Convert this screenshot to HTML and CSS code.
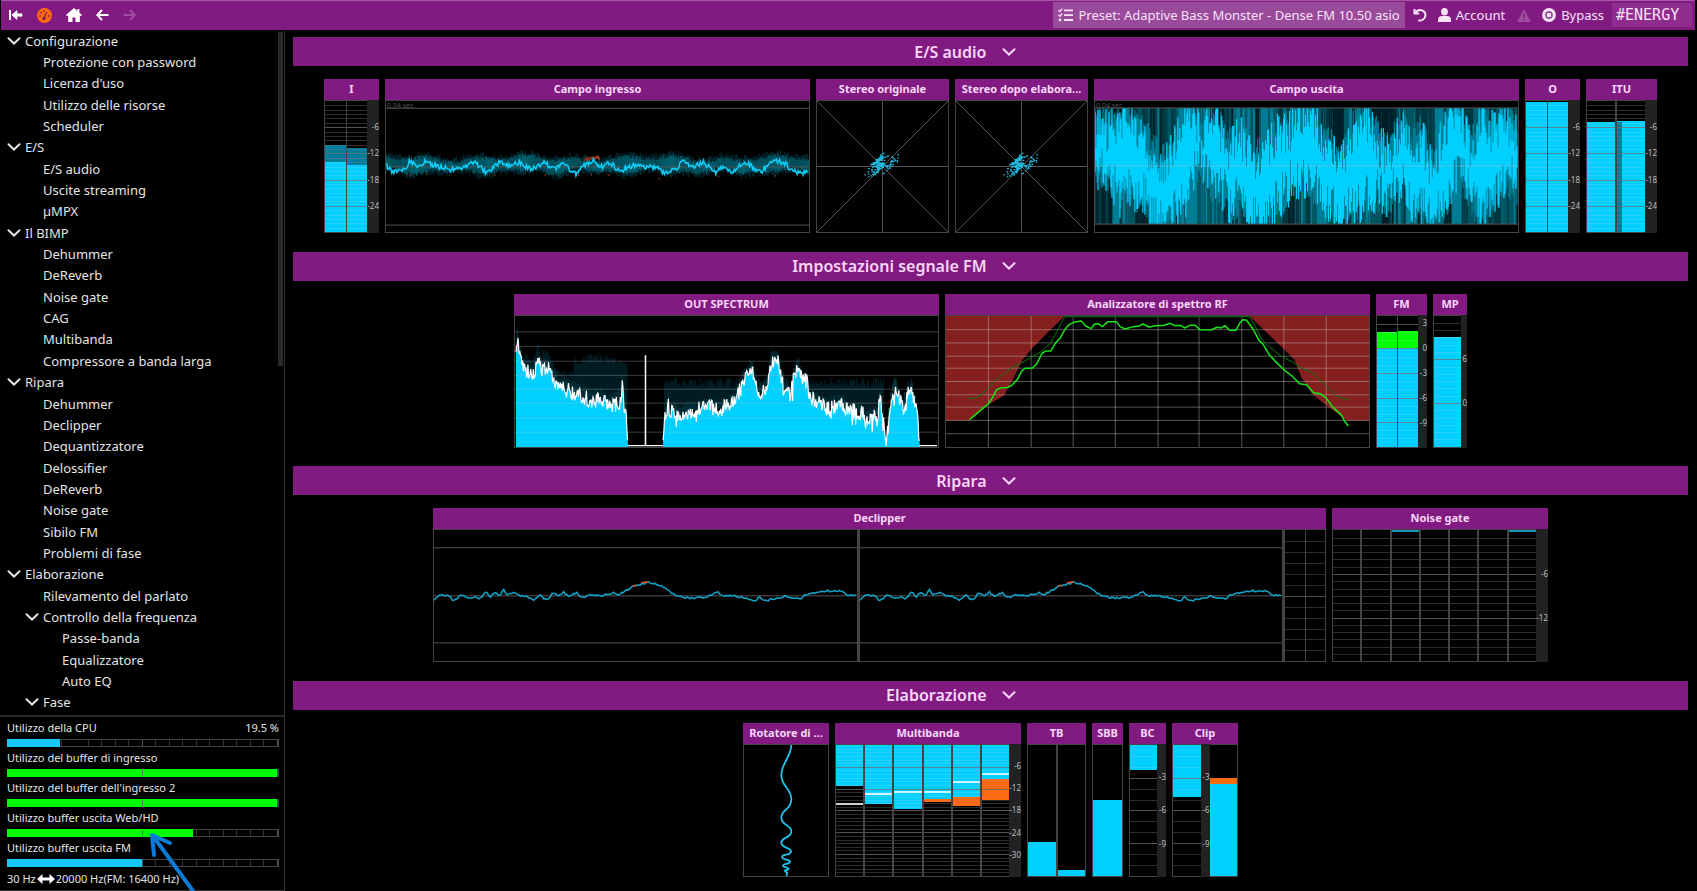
FILE: index.html
```html
<!DOCTYPE html>
<html lang="it">
<head>
<meta charset="utf-8">
<title>Adaptive Bass Monster</title>
<link rel="stylesheet" href="styles.css">
</head>
<body>
<svg class="defs" aria-hidden="true">
  <symbol id="chev" viewBox="0 0 14 8"><path d="M1.5 1.2 7 6.5 12.5 1.2" fill="none" stroke="currentColor" stroke-width="2" stroke-linecap="round"/></symbol>
</svg>
<header class="topbar">
  <div class="tools">
    <button class="tool" aria-label="Riduci menu"><svg width="14" height="12" viewBox="0 0 14 12"><path d="M1 1v10" stroke="currentColor" stroke-width="2"/><path d="M13 4.8H8V1.5L2.8 6 8 10.5V7.2h5z" fill="currentColor" stroke="currentColor" stroke-width=".6"/></svg></button>
    <button class="tool gauge" aria-label="Pannello"><svg width="15" height="15" viewBox="0 0 15 15"><circle cx="7.5" cy="7.5" r="7.5" fill="currentColor"/><path d="M6.8 10.2 9.8 4.2" stroke="#7a1f50" stroke-width="1.4"/><circle cx="7" cy="10.6" r="1.7" fill="#7a1f50"/><g fill="#7a1f50"><circle cx="3" cy="8" r=".9"/><circle cx="4.3" cy="4.6" r=".9"/><circle cx="7.3" cy="3.1" r=".9"/><circle cx="12" cy="8" r=".9"/></g></svg></button>
    <button class="tool" aria-label="Home"><svg width="16" height="14" viewBox="0 0 16 14"><path d="M8 0 0 7l1 1.2 1.2-1V14h4.3V9.5h3V14h4.3V7.2l1.2 1L16 7l-2.6-2.3V1h-2v2z" fill="currentColor"/></svg></button>
    <button class="tool" aria-label="Indietro"><svg width="13" height="12" viewBox="0 0 13 12"><path d="M6 1 1.3 6 6 11M1.5 6H12.5" fill="none" stroke="currentColor" stroke-width="2"/></svg></button>
    <button class="tool dim" aria-label="Avanti" disabled><svg width="13" height="12" viewBox="0 0 13 12"><path d="M7 1 11.7 6 7 11M11.5 6H.5" fill="none" stroke="currentColor" stroke-width="2"/></svg></button>
  </div>
  <div class="status">
    <button class="preset"><svg width="15" height="14" viewBox="0 0 15 14"><path d="M.5 2.2 1.8 3.5 4.2.8M.5 7 1.8 8.2 4.2 5.5" fill="none" stroke="currentColor" stroke-width="1.3"/><circle cx="2" cy="12" r="1.4" fill="currentColor"/><path d="M6 2.3h9M6 7.1h9M6 12h9" stroke="currentColor" stroke-width="1.8"/></svg>Preset: Adaptive Bass Monster - Dense FM 10.50 asio</button>
    <button class="tool" aria-label="Annulla"><svg width="14" height="14" viewBox="0 0 14 14"><path d="M1.5 1v4.600h4.600M2 5.400C3.600 2.600 6 1.700 8.200 2.200 11 2.800 12.600 5 12.400 7.600 12.100 11 9 13 5.200 12.500" fill="none" stroke="currentColor" stroke-width="2"/></svg></button>
    <button class="item"><svg width="13" height="14" viewBox="0 0 13 14"><ellipse cx="6.500" cy="3.800" rx="3.400" ry="3.800" fill="currentColor"/><path d="M0 14v-2.500C0 9 2 8 4 8h5c2 0 4 1 4 3.500V14z" fill="currentColor"/></svg>Account</button>
    <button class="tool dim" aria-label="Avvisi"><svg width="14" height="13" viewBox="0 0 14 13"><path d="M7 0 14 13H0z" fill="currentColor"/><path d="M7 4.500v4M7 9.800v1.500" stroke="#811b81" stroke-width="1.500"/></svg></button>
    <button class="item"><svg width="14" height="14" viewBox="0 0 14 14"><circle cx="7" cy="7" r="5.300" fill="none" stroke="currentColor" stroke-width="3.200"/><rect x="4.800" y="4.800" width="4.400" height="4.400" fill="currentColor"/></svg>Bypass</button>
    <span class="brand">#ENERGY</span>
  </div>
</header>
<div class="body">
<aside class="side">
  <nav class="tree">
    <a href="#" class="l0"><svg><use href="#chev"/></svg>Configurazione</a>
    <a href="#" class="l1">Protezione con password</a>
    <a href="#" class="l1">Licenza d'uso</a>
    <a href="#" class="l1">Utilizzo delle risorse</a>
    <a href="#" class="l1">Scheduler</a>
    <a href="#" class="l0"><svg><use href="#chev"/></svg>E/S</a>
    <a href="#" class="l1">E/S audio</a>
    <a href="#" class="l1">Uscite streaming</a>
    <a href="#" class="l1">µMPX</a>
    <a href="#" class="l0"><svg><use href="#chev"/></svg>Il BIMP</a>
    <a href="#" class="l1">Dehummer</a>
    <a href="#" class="l1">DeReverb</a>
    <a href="#" class="l1">Noise gate</a>
    <a href="#" class="l1">CAG</a>
    <a href="#" class="l1">Multibanda</a>
    <a href="#" class="l1">Compressore a banda larga</a>
    <a href="#" class="l0"><svg><use href="#chev"/></svg>Ripara</a>
    <a href="#" class="l1">Dehummer</a>
    <a href="#" class="l1">Declipper</a>
    <a href="#" class="l1">Dequantizzatore</a>
    <a href="#" class="l1">Delossifier</a>
    <a href="#" class="l1">DeReverb</a>
    <a href="#" class="l1">Noise gate</a>
    <a href="#" class="l1">Sibilo FM</a>
    <a href="#" class="l1">Problemi di fase</a>
    <a href="#" class="l0"><svg><use href="#chev"/></svg>Elaborazione</a>
    <a href="#" class="l1">Rilevamento del parlato</a>
    <a href="#" class="l1 group"><svg><use href="#chev"/></svg>Controllo della frequenza</a>
    <a href="#" class="l2">Passe-banda</a>
    <a href="#" class="l2">Equalizzatore</a>
    <a href="#" class="l2">Auto EQ</a>
    <a href="#" class="l1 group"><svg><use href="#chev"/></svg>Fase</a>
  </nav>
  <div class="usage">
    <div class="use"><span>Utilizzo della CPU</span><span>19.5 %</span></div>
    <div class="gaugebar"><i style="width:19.5%"></i></div>
    <div class="use"><span>Utilizzo del buffer di ingresso</span></div>
    <div class="gaugebar ok"><i style="width:100%"></i></div>
    <div class="use"><span>Utilizzo del buffer dell'ingresso 2</span></div>
    <div class="gaugebar ok"><i style="width:100%"></i></div>
    <div class="use"><span>Utilizzo buffer uscita Web/HD</span></div>
    <div class="gaugebar ok"><i style="width:69%"></i></div>
    <div class="use"><span>Utilizzo buffer uscita FM</span></div>
    <div class="gaugebar"><i style="width:50%"></i></div>
    <p class="range"><span>30 Hz</span><svg width="18" height="10" viewBox="0 0 18 10"><path d="M0 5 5.500 0v3.500h7V0L18 5l-5.500 5V6.500h-7V10z" fill="#fff"/></svg><span>20000 Hz(FM: 16400 Hz)</span></p>
  </div>
  <svg class="pointer" width="50" height="60" viewBox="0 0 50 60"><path d="M44 60 4 5M5 24 3 4 21 12" fill="none" stroke="#0a7bd6" stroke-width="4" stroke-linecap="round" stroke-linejoin="round"/></svg>
</aside>
<main class="main">
  <section>
    <h2><button>E/S audio</button><svg><use href="#chev"/></svg></h2>
    <div class="row">
      <article class="panel w-io"><h3>I</h3>
        <div class="meter" data-top="0" data-bottom="-30" data-major="6">
          <div class="col"><i class="peak" style="top:33.500%"></i><i class="fill" style="top:46.500%"></i></div>
          <div class="col"><i class="peak" style="top:35.500%"></i><i class="fill" style="top:48.800%"></i></div>
          <div class="scale"></div>
        </div></article>
      <article class="panel w-scope"><h3>Campo ingresso</h3><div class="chart"><small>0.04 sec</small><svg id="input" viewBox="276 210 1234 398" preserveAspectRatio="none"></svg></div></article>
      <article class="panel w-stereo"><h3>Stereo originale</h3><div class="chart"><svg class="stereo" viewBox="0 0 133 133" preserveAspectRatio="none"></svg></div></article>
      <article class="panel w-stereo"><h3>Stereo dopo elabora...</h3><div class="chart"><svg class="stereo" viewBox="0 0 133 133" preserveAspectRatio="none"></svg></div></article>
      <article class="panel w-scope"><h3>Campo uscita</h3><div class="chart"><small>0.04 sec</small><svg id="output" viewBox="0 100 424 133" preserveAspectRatio="none"></svg></div></article>
      <article class="panel w-io"><h3>O</h3>
        <div class="meter" data-top="0" data-bottom="-30" data-major="6">
          <div class="col"><i class="fill" style="top:1%"></i></div>
          <div class="col"><i class="fill" style="top:1%"></i></div>
          <div class="scale"></div>
        </div></article>
      <article class="panel w-itu"><h3>ITU</h3>
        <div class="meter split" data-top="0" data-bottom="-30" data-major="6">
          <div class="col"><i class="fill" style="top:16%"></i></div>
          <div class="col"><i class="fill" style="top:15%"></i><i class="strip"></i></div>
          <div class="scale"></div>
        </div></article>
    </div>
  </section>
  <section>
    <h2><button>Impostazioni segnale FM</button><svg><use href="#chev"/></svg></h2>
    <div class="row">
      <article class="panel w-scope"><h3>OUT SPECTRUM</h3><div class="chart"><svg id="spectrum" viewBox="42 103 1274 397" preserveAspectRatio="none"></svg></div></article>
      <article class="panel w-scope"><h3>Analizzatore di spettro RF</h3><div class="chart">
        <svg viewBox="46 106 1207 394" preserveAspectRatio="none">
          <path fill="#86201f" d="M46 106H385L340 152 290 205 265 237 240 290 212 345 165 374 113 420H46zM1253 106H912L960 155 1010 205 1040 237 1060 290 1090 340 1130 374 1190 420H1253z"/>
          <path class="g2" d="M46 147H1253M46 187H1253M46 227H1253M46 263H1253M46 303H1253M46 343H1253M46 380H1253M46 420H1253M46 460H1253M167 106V500M289 106V500M409 106V500M529 106V500M651 106V500M768 106V500M890 106V500M1010 106V500M1131 106V500"/>
          <path fill="none" stroke="#087808" stroke-width="1" vector-effect="non-scaling-stroke" d="M110 353 128 354 150 340 180 305 210 280 235 260 260 248 290 230 318 213 345 187 365 147 385 108H912L930 140 945 172 960 192 1000 225 1040 248 1060 262 1090 276 1115 300 1140 325 1165 350 1195 357"/>
          <path fill="none" stroke="#16e616" stroke-width="1.500" vector-effect="non-scaling-stroke" stroke-linejoin="round" d="M113 418 135 398 167 370 178 352 190 328 205 322 222 321 235 313 250 296 262 272 272 263 292 263 305 250 320 218 332 211 345 211 360 185 372 172 385 147 395 134 410 125 432 121 445 136 460 144 470 130 480 129 492 138 508 123 532 123 543 138 557 145 580 138 595 137 608 130 625 139 645 135 670 134 684 128 700 135 715 134 727 142 742 134 757 134 770 147 802 148 820 140 832 142 842 135 855 149 873 149 884 128 893 117 903 118 920 142 940 180 950 190 970 225 990 247 1015 272 1035 288 1055 310 1075 313 1095 337 1115 340 1130 352 1150 380 1175 405 1185 425 1194 437"/>
        </svg></div></article>
      <article class="panel w-fm"><h3>FM</h3>
        <div class="meter slim" data-top="4" data-bottom="-12" data-major="3">
          <div class="col"><i class="fill" style="top:25%"></i><i class="hot" style="top:12.500%;bottom:75%"></i></div>
          <div class="col"><i class="fill" style="top:25%"></i><i class="hot" style="top:11.800%;bottom:75%"></i></div>
          <div class="scale"></div>
        </div></article>
      <article class="panel w-mp"><h3>MP</h3>
        <div class="meter narrow" data-top="12" data-bottom="-6" data-major="6">
          <div class="col"><i class="fill" style="top:16%"></i></div>
          <div class="scale"></div>
        </div></article>
    </div>
  </section>
  <section>
    <h2><button>Ripara</button><svg><use href="#chev"/></svg></h2>
    <div class="row">
      <article class="panel w-declip"><h3>Declipper</h3>
        <div class="declip">
          <div class="chart"><svg class="wave" viewBox="42 119 1273 398" preserveAspectRatio="none"></svg></div>
          <div class="chart"><svg class="wave" viewBox="42 119 1273 398" preserveAspectRatio="none"></svg></div>
          <div class="meter" data-top="0" data-bottom="-12" data-major="6"><div class="col"></div><div class="col"></div></div>
        </div></article>
      <article class="panel w-gate"><h3>Noise gate</h3>
        <div class="meter split" data-top="0" data-bottom="-18" data-major="6">
          <div class="col"></div><div class="col"></div><div class="col"><i class="tip"></i></div><div class="col"></div><div class="col"></div><div class="col"></div><div class="col"><i class="tip"></i></div>
          <div class="scale"></div>
        </div></article>
    </div>
  </section>
  <section>
    <h2><button>Elaborazione</button><svg><use href="#chev"/></svg></h2>
    <div class="row">
      <article class="panel w-rot"><h3>Rotatore di ...</h3><div class="chart">
        <svg viewBox="40 105 252 394" preserveAspectRatio="none"><path fill="none" stroke="#22c3ee" stroke-width="1.800" vector-effect="non-scaling-stroke" d="M182 105C182 140 152 160 152 195S182 235 182 268 152 298 152 323 182 345 182 365 152 382 152 399 181 413 181 425 154 433 154 442 178 449 178 456 157 462 157 468 174 472 174 477 162 480 163 484 170 487 170 490L167 499"/></svg></div></article>
      <article class="panel w-multi"><h3>Multibanda</h3>
        <div class="meter split" data-top="0" data-bottom="-36" data-major="6">
          <div class="col"><i class="fill" style="top:0;bottom:68.500%"></i><i class="mark" style="top:44.500%"></i></div>
          <div class="col"><i class="fill" style="top:0;bottom:55%"></i><i class="mark" style="top:37%"></i></div>
          <div class="col"><i class="fill" style="top:0;bottom:51.400%"></i><i class="mark" style="top:35.500%"></i></div>
          <div class="col"><i class="fill" style="top:0;bottom:58.800%"></i><i class="over" style="top:41.200%;bottom:56.500%"></i><i class="mark" style="top:35.500%"></i></div>
          <div class="col"><i class="fill" style="top:0;bottom:60%"></i><i class="over" style="top:40%;bottom:53.400%"></i><i class="mark" style="top:27.500%"></i></div>
          <div class="col"><i class="fill" style="top:0;bottom:73.800%"></i><i class="over" style="top:26.200%;bottom:57.800%"></i><i class="mark" style="top:21.500%"></i></div>
          <div class="scale"></div>
        </div></article>
      <article class="panel w-tb"><h3>TB</h3>
        <div class="meter split">
          <div class="col"><i class="fill" style="top:74%"></i></div>
          <div class="col"><i class="fill" style="top:95.500%"></i></div>
        </div></article>
      <article class="panel w-sbb"><h3>SBB</h3><div class="meter"><div class="col"><i class="fill" style="top:42%"></i></div></div></article>
      <article class="panel w-bc"><h3>BC</h3>
        <div class="meter slim" data-top="0" data-bottom="-12" data-major="3">
          <div class="col"><i class="fill" style="top:0;bottom:81.200%"></i></div>
          <div class="scale"></div>
        </div></article>
      <article class="panel w-clip"><h3>Clip</h3>
        <div class="meter slim" data-top="0" data-bottom="-12" data-major="3">
          <div class="col"><i class="fill" style="top:0;bottom:60.300%"></i></div>
          <div class="scale"></div>
          <div class="col plain"><i class="fill" style="top:29.500%"></i><i class="over" style="top:25.500%;bottom:70.500%"></i></div>
        </div></article>
    </div>
  </section>
</main>
</div>
<script src="charts.js"></script>
</body>
</html>
```
FILE: styles.css
```css
* { box-sizing: border-box; }
body {
  margin: 0; height: 100vh; overflow: hidden; display: flex; flex-direction: column;
  background: #000; color: #e4e4e4; font-family: "Noto Sans", sans-serif; font-size: 13px;
}
button { font: inherit; color: inherit; background: none; border: 0; padding: 0; margin: 0; }
.defs { position: absolute; width: 0; height: 0; }

.topbar {
  flex: none; height: 30px; margin: 0 2px 1px 1px; padding: 0 3px 1px 8px;
  display: flex; justify-content: space-between; align-items: stretch;
  background: #811b81; border-top: 1px solid #a557a5; color: #fff;
}
.topbar svg { display: block; flex: none; }
.tools, .status { display: flex; align-items: center; }
.tools { gap: 14px; }
.gauge { color: #ff6a0c; }
.dim { color: #a04ca0; }
.status { color: #f8e2f8; }
.status > .tool { padding: 0 7px 0 8px; }
.preset, .item { display: flex; align-items: center; gap: 5px; }
.preset { height: 26px; padding: 0 5px; background: #9a4a9a; white-space: nowrap; }
.item { padding: 0 4px; }
.brand {
  height: 24px; width: 80px; margin-left: 4px; padding-left: 4px; line-height: 24px;
  background: #8e2d8e; font-family: "DejaVu Sans Mono", monospace; font-size: 15px;
}

.body { flex: 1; min-height: 0; display: flex; }
.side {
  position: relative; flex: none; width: 285px; display: flex; flex-direction: column;
  border-right: 1px solid #333; border-bottom: 1px solid #333;
}
.tree {
  flex: 1; display: grid; grid-auto-rows: 1fr; margin-right: 1px; padding-bottom: 1px;
  background: linear-gradient(#2a2a2a, #2a2a2a) no-repeat right 1px / 5px 334px;
}
.tree a {
  display: flex; align-items: center; padding-bottom: 2px;
  color: inherit; text-decoration: none; line-height: 18px;
}
.tree svg { width: 14px; height: 8px; margin-right: 4px; }
.tree .l0 { padding-left: 7px; }
.tree .l1 { padding-left: 43px; }
.tree .l2 { padding-left: 62px; }
.tree .group { padding-left: 25px; }

.usage { flex: none; border-top: 2px solid #2a2a2a; padding: 0 5px 0 7px; font-size: 11px; }
.use { display: flex; justify-content: space-between; height: 22px; line-height: 22px; }
.gaugebar {
  position: relative; height: 8px; border: 1px solid #444;
  background: repeating-linear-gradient(to right, transparent 0 calc(5% - 1px), #333 calc(5% - 1px) 5%);
}
.gaugebar i { position: absolute; inset: -1px auto -1px -1px; background: #18c8f8; }
.gaugebar.ok i { background: #0f0; }
.gaugebar::after {
  content: ""; position: absolute; inset: 0;
  background: repeating-linear-gradient(to right, transparent 0 calc(25% - 1px), rgba(90,90,90,.8) calc(25% - 1px) 25%);
}
.range { display: flex; align-items: center; margin: 0; height: 23px; gap: 1px; }
.pointer { position: absolute; left: 149px; bottom: -1px; }

.main {
  flex: 1; min-width: 0; padding: 6px 9px 14px 8px;
  display: flex; flex-direction: column; justify-content: space-between;
}
.main h2 {
  margin: 0; height: 29px; display: grid; grid-template-columns: 1fr 1fr; align-items: center; column-gap: 15px;
  padding-left: 7px; background: #811b81; color: #f8d6f8; font-size: 16px; font-weight: 600;
}
.main h2 button { justify-self: end; line-height: 22px; }
.main h2 svg { width: 14px; height: 8px; }
.row { display: flex; justify-content: center; gap: 6px; padding-top: 13px; }
.panel { flex: none; }
.panel h3 {
  margin: 0; height: 21px; line-height: 20px; padding: 0 4px; text-align: center;
  font-size: 11px; font-weight: 700; background: #811b81; color: #f8d6f8; white-space: nowrap;
}
.w-io { width: 55px; }
.w-scope { width: 425px; }
.w-stereo { width: 133px; }
.w-itu { width: 71px; }
.w-fm { width: 51px; }
.w-mp { width: 34px; }
.w-declip { width: 893px; }
.w-gate { width: 216px; }
.w-rot { width: 86px; }
.w-multi { width: 186px; }
.w-tb { width: 59px; }
.w-sbb { width: 31px; }
.w-bc { width: 37px; }
.w-clip { width: 66px; }

.chart { position: relative; height: 133px; border: 1px solid #444; }
.chart svg { display: block; width: 100%; height: 100%; overflow: hidden; }
.chart small { position: absolute; left: 1px; top: 0; font-size: 7px; line-height: 10px; color: #555; }
.g1, .g2 { fill: none; stroke: #555; stroke-width: 1; vector-effect: non-scaling-stroke; }
.g2 { stroke: rgba(190,190,190,.45); }

.meter { display: flex; height: 133px; border: 1px solid #444; }
.meter:has(.scale:last-child) { border-right: 0; }
.col { position: relative; flex: 1; background: #000; isolation: isolate; }
.col + .col { border-left: 1px solid #444; }
.split .col + .col { border-left: 2px solid #444; }
.col i { position: absolute; left: 0; right: 0; bottom: 0; }
.fill { background: #00d0ff; }
.peak { background: #007d99; }
.hot { background: #0f0; }
.over { background: #f86a0c; }
.col .mark { height: 2px; bottom: auto; background: rgba(255,255,255,.8); }
.col .tip { height: 2px; bottom: auto; background: #1796b8; }
.col .strip { right: auto; width: 5px; top: 16%; background: #007d99; }
.col .line { height: 1px; bottom: auto; background: #2c2c2c; mix-blend-mode: lighten; }
.col .major { background: rgba(110,110,110,.75); mix-blend-mode: normal; }
.scale { position: relative; flex: none; width: 12px; margin: -1px 0; background: #222; }
.slim .scale { width: 9px; }
.narrow .scale { width: 6px; }
.scale span { position: absolute; right: 0; margin-top: -5px; font-size: 8px; line-height: 10px; color: #bbb; }
.declip { display: grid; grid-template-columns: 425px 425px 1fr; }
.declip > * + * { border-left-width: 2px; }
```
FILE: charts.js
```js
let seed = 7;
function rnd() {
  seed = (seed * 1664525 + 1013904223) % 4294967296;
  return seed / 4294967296;
}
function jitter(a) { return (rnd() - 0.5) * 2 * a; }

/* Linear interpolation through [x, v1, v2...] rows. */
function at(points, x, k) {
  let i = 1;
  while (i < points.length - 1 && points[i][0] < x) i++;
  const a = points[i - 1], b = points[i];
  const t = Math.min(1, Math.max(0, (x - a[0]) / (b[0] - a[0])));
  return a[k] + (b[k] - a[k]) * t;
}
function path(d, stroke, width, fill) {
  return `<path d="${d}" fill="${fill || 'none'}" stroke="${stroke}" stroke-width="${width}" vector-effect="non-scaling-stroke"/>`;
}
function pairs(list) {
  const out = [];
  for (let i = 0; i < list.length; i += 2) out.push([list[i], list[i + 1]]);
  return out;
}

/* Meter grid lines and scale labels. */
document.querySelectorAll('.meter[data-top]').forEach(m => {
  const top = +m.dataset.top, bottom = +m.dataset.bottom, major = +m.dataset.major;
  for (let v = top - 1; v > bottom; v--) {
    const pos = (top - v) / (top - bottom) * 100;
    m.querySelectorAll('.col:not(.plain)').forEach(c => {
      c.insertAdjacentHTML('beforeend', `<i class="line${v % major ? '' : ' major'}" style="top:${pos}%"></i>`);
    });
    const scale = m.querySelector('.scale');
    if (scale && v % major === 0) scale.insertAdjacentHTML('beforeend', `<span style="top:${pos}%">${v}</span>`);
  }
});

/* Input field */
{
  const pts = pairs([276,403,292,425,330,420,342,395,375,408,390,395,425,408,460,418,500,410,535,395,570,428,610,395,640,410,665,395,700,420,735,398,770,415,795,400,820,430,835,430,850,405,880,393,905,410,930,395,955,425,985,410,1010,405,1035,412,1060,410,1090,428,1115,420,1145,392,1170,412,1200,395,1235,428,1260,410,1290,428,1320,395,1370,425,1405,390,1440,400,1465,425,1510,430]);
  let far = '', near = '', line = '', red = '';
  for (let x = 278; x < 1510; x += 3) {
    const up = 6 * Math.sin(x / 23) + 5 * Math.sin(x / 61), down = 6 * Math.sin(x / 31 + 2) + 5 * Math.sin(x / 17);
    far += `M${x} ${384 + up - rnd() * 16}V${424 + down + rnd() * 16}`;
    near += `M${x} ${392 + up - rnd() * 12}V${416 + down + rnd() * 12}`;
    line += `${line ? 'L' : 'M'}${x} ${at(pts, x, 1) + jitter(8)}`;
    if (x > 855 && x < 900) red += `M${x} ${380 + jitter(5)}v10`;
    if (rnd() > 0.96) red += `M${x} ${430 + rnd() * 14}v5`;
  }
  document.getElementById('input').innerHTML =
    path(far, '#002c35', 1) + path(near, '#00606f', 1) + path(red, '#a13a1c', 1) +
    '<path class="g1" d="M276 232H1510M276 410H1510M276 587H1510"/>' + path(line, '#10cdf8', 1.5);
}

/* Output field: vertical strokes in several intensities */
{
  const a = [[890,180,290],[930,175,300],[960,170,390],[990,140,350],[1030,200,370],[1060,250,430],[1085,290,465],[1120,260,440],[1160,110,390],[1200,180,260],[1250,150,350],[1285,230,370],[1300,230,440],[1325,200,350],[1360,280,455],[1400,260,430],[1440,180,390],[1480,180,330]]
    .map(p => [(p[0] - 888) / 3, (p[1] - 112) / 354, (p[2] - 112) / 354]);
  const b = [[50,250,450],[95,240,450],[130,330,490],[165,370,530],[185,400,586],[220,320,520],[255,250,510],[300,340,480],[330,380,500],[375,270,440],[400,370,510],[430,320,530],[460,420,586],[490,330,530],[520,240,460],[550,270,430],[580,360,480],[605,260,560],[640,310,490],[690,290,440],[720,320,460]]
    .map(p => [184 + p[0] / 3, (p[1] - 233) / 353, (p[2] - 233) / 353]);
  const pts = a.concat(b);
  const colors = ['#001f26', '#003640', '#005563', '#007d94'];
  const back = ['', '', '', ''];
  let bright = '', upper = 1, lower = 2;
  const clamp = v => Math.min(1, Math.max(0, v));
  const y = v => 107 + clamp(v) * 118;
  for (let x = 0; x < 424; x++) {
    const t = at(pts, x, 1), u = at(pts, x, 2), middle = (t + u) / 2;
    if (rnd() > .7) upper = Math.floor(rnd() * (middle > .5 ? 4 : 3));
    if (rnd() > .7) lower = Math.floor(rnd() * (middle > .5 ? 3 : 4));
    const flick = rnd() > .8 ? 1 : 0;
    back[Math.min(3, upper + flick)] += `M${x} 107V${y(middle)}`;
    back[Math.min(3, lower + flick)] += `M${x} ${y(middle)}V225`;
    back[3] += `M${x} ${y(t - rnd() * .2)}V${y(u + rnd() * .2)}`;
    bright += `M${x} ${y(t + jitter(.2))}V${y(u + jitter(.2))}`;
  }
  document.getElementById('output').innerHTML =
    back.map((d, i) => path(d, colors[i], 1.2)).join('') + path(bright, '#00d0ff', 1.2) +
    '<path class="g1" d="M0 107H424M0 225H424"/><path class="g2" d="M0 166H424"/>';
}

/* Stereo scopes */
document.querySelectorAll('.stereo').forEach(s => {
  seed = 21;
  let dots = '';
  for (let i = 0; i < 110; i++) {
    const k = jitter(1) * rnd() * 13, n = jitter(4);
    dots += `M${62 + k + n} ${64 - k + n * .8}h2`;
  }
  for (let i = 0; i < 34; i++) {
    const k = rnd() * 22;
    dots += `M${60 + k} ${76 - k * .85 + jitter(4)}h1.500`;
  }
  for (let i = 0; i < 10; i++) dots += `M${50 + i + jitter(2)} ${76 - i + jitter(3)}h1.500`;
  s.innerHTML = '<path class="g1" d="M0 0 133 133M133 0 0 133M0 66.500H133M66.500 0V133"/>' + path(dots, '#1fb6dd', 1.300);
});

/* Output spectrum */
{
  const pts = pairs([45,200,50,180,56,230,66,265,80,270,95,285,105,262,112,240,120,262,132,262,142,262,155,295,175,318,190,325,220,335,250,350,280,360,305,352,325,375,345,372,360,360,366,290,371,365,376,380,381,480,382,497,430,497]);
  const right = pairs([488,480,492,420,500,395,503,350,507,395,545,405,575,390,600,385,625,375,650,385,680,375,705,360,715,335,728,300,742,290,753,262,765,300,775,335,795,330,805,290,815,235,833,235,842,285,852,320,872,340,885,275,893,262,905,290,920,300,930,345,950,365,985,385,1020,370,1045,390,1080,395,1105,412,1135,400,1142,350,1150,410,1158,480,1160,497,1164,440,1175,350,1187,318,1198,345,1210,385,1222,345,1235,315,1248,370,1258,450,1261,497]);
  const trace = (p, from, to) => {
    let d = '';
    for (let x = from; x < to; x += 2) {
      const base = at(p, x, 1);
      const dip = rnd() > .96 ? 30 : 0;
      d += `${d ? 'L' : 'M'}${x} ${base > 450 ? base : base + dip + jitter(24)}`;
    }
    return d;
  };
  const L = trace(pts, 45, 383), R = trace(right, 488, 1262);
  let halo = '', halo2 = '';
  for (let x = 46; x < 380; x += 3) {
    const base = at(pts, x, 1);
    const top = x < 220 ? base - 35 - x / 12 : 225 + Math.abs(x - 285) / 4;
    halo += `M${x} ${top + jitter(14)}V400`;
    halo2 += `M${x} ${base - 28 + jitter(12)}V400`;
  }
  for (let x = 492; x < 1255; x += 3) {
    const base = at(right, x, 1);
    if (base > 440) continue;
    if (x < 1155) halo += `M${x} ${Math.min(base - 25, 305) + jitter(14)}V${base}`;
    halo2 += `M${x} ${base - 22 + jitter(12)}V${base}`;
  }
  document.getElementById('spectrum').innerHTML =
    path(halo, '#001c22', 1.2) + path(halo2, '#00323c', 1) +
    path(L + 'L383 500H45Z', 'none', 0, '#00d0ff') + path(R + 'L1262 500H488Z', 'none', 0, '#00d0ff') +
    path(L, '#fff', 1.2) + path(R, '#fff', 1.2) + path('M435 222V496', '#fff', 1.5) +
    path('M382 496H488M1260 496H1313', '#fff', 1.2) +
    '<path class="g2" d="M42 151H1316M42 195H1316M42 240H1316M42 283H1316M42 325H1316M42 367H1316M42 412H1316M42 455H1316" opacity=".7"/>';
}

/* Declipper waves */
{
  const pts = pairs([42,332,55,320,70,316,90,318,98,335,115,325,125,317,150,328,170,322,180,328,200,305,210,325,225,308,240,318,250,298,262,318,285,308,300,318,320,320,345,332,362,315,375,330,390,325,400,310,415,320,433,308,450,322,470,308,488,325,510,315,545,320,580,310,600,315,640,290,650,288,685,278,708,280,740,297,770,318,800,326,860,324,895,307,915,320,940,318,985,328,1010,335,1020,322,1040,334,1100,320,1145,328,1160,315,1230,304,1270,305,1290,318,1315,316]);
  let d = '';
  for (let x = 42; x <= 1315; x += 5) d += `${d ? 'L' : 'M'}${x} ${at(pts, x, 1) + jitter(3)}`;
  document.querySelectorAll('.wave').forEach(w => {
    w.innerHTML = '<path class="g1" d="M42 173H1315M42 319H1315M42 462H1315"/>' + path(d, '#12a5cb', 1.5) +
      path('M640 290 650 286M666 280 675 277 686 278', '#e0441c', 1.5);
  });
}
```
